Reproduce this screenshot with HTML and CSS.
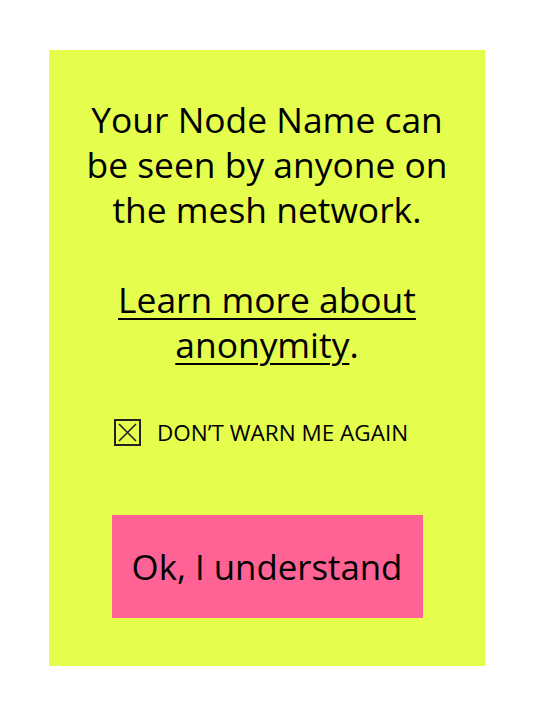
FILE: index.html
```html
<!DOCTYPE html>
<html>
<head>
<meta charset="utf-8">
<link rel="stylesheet" href="styles.css">
</head>
<body>
<div class="panel">
  <p class="msg">Your Node Name can be seen by anyone on the mesh network.</p>
  <p class="msg"><a class="link" href="#">Learn more about anonymity</a>.</p>
  <label class="check">
    <span class="box"><svg width="23" height="23" viewBox="0 0 23 23"><path d="M3 3 L20 20 M20 3 L3 20" stroke="#222" stroke-width="1.6" fill="none"/></svg></span>
    <span class="check-label">DON’T WARN ME AGAIN</span>
  </label>
  <button class="ok">Ok, I understand</button>
</div>
</body>
</html>
```
FILE: styles.css
```css
html, body { margin: 0; padding: 0; background: #fff; }
body { font-family: "Open Sans", "Noto Sans", sans-serif; color: #000; }
.panel {
  margin: 50px 0 0 49px;
  width: 436px;
  height: 616px;
  box-sizing: border-box;
  background: #e5fd4c;
  display: flex;
  flex-direction: column;
  align-items: center;
  padding-top: 47px;
}
.msg {
  margin: 0 0 45px 0;
  width: 400px;
  text-align: center;
  font-size: 35.4px;
  line-height: 45px;
}
.msg + .msg { margin-bottom: 50px; }
.link { color: #000; text-decoration: underline; text-decoration-thickness: 2px; text-underline-offset: 5px; }
.check {
  display: flex;
  align-items: center;
  gap: 16px;
  align-self: flex-start;
  margin-left: 65px;
}
.box {
  width: 27px;
  height: 27px;
  box-sizing: border-box;
  border: 2px solid #222;
  display: flex;
  align-items: center;
  justify-content: center;
}
.check-label { font-size: 22.5px; }
.ok {
  margin-top: 67px;
  width: 311px;
  height: 103px;
  border: none;
  background: #ff6294;
  font-family: inherit;
  font-size: 34.8px;
  color: #000;
  padding: 0;
}
```
